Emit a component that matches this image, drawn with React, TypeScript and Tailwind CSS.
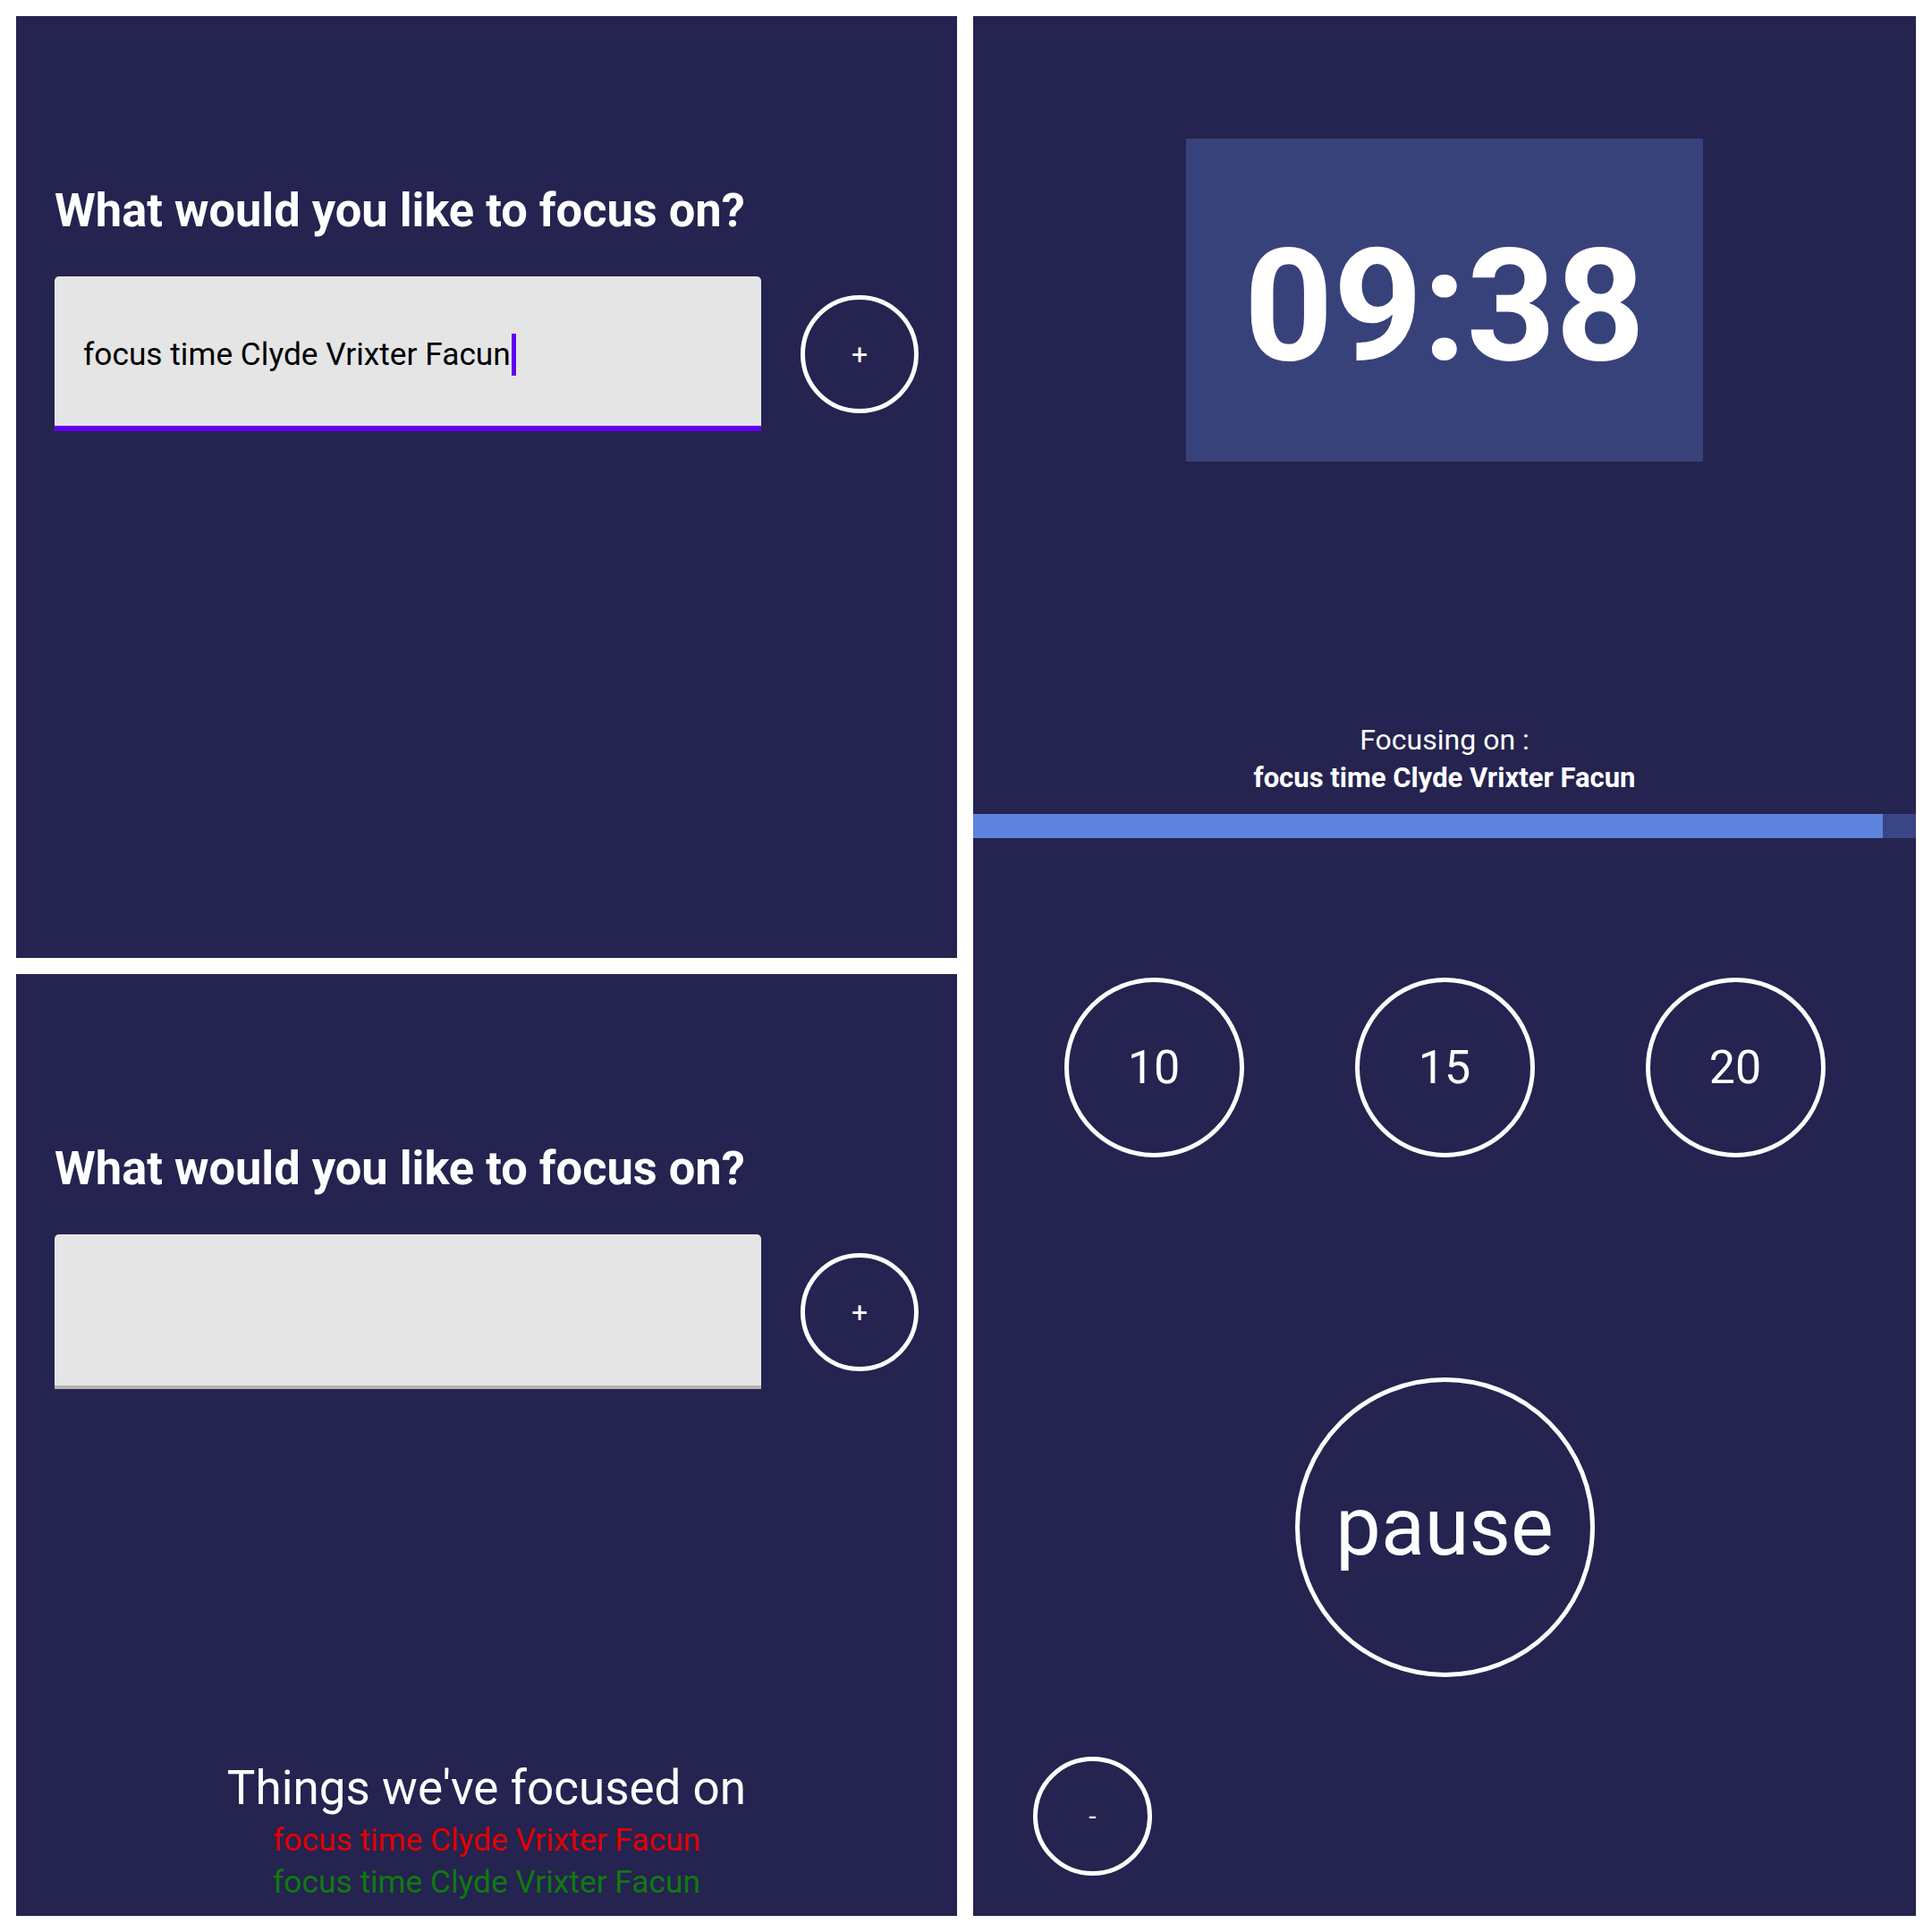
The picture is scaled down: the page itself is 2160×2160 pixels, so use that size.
import React from 'react';

const TASK = 'focus time Clyde Vrixter Facun';

const RoundButton = ({ label, size, text }: { label: string; size: string; text: string }) => (
  <button
    className={`${size} ${text} shrink-0 rounded-full border-[5px] border-white text-white flex items-center justify-center leading-none`}
  >
    {label}
  </button>
);

const FocusForm = ({ value, active }: { value: string; active: boolean }) => (
  <div className="flex flex-col pl-[43px]">
    <h1 className="text-[52.4px] font-bold leading-none text-white pt-[191px]">What would you like to focus on?</h1>
    <div className="flex items-center gap-[44px] mt-[48px]">
      <div
        className={`w-[790px] h-[173px] bg-[#e5e5e5] rounded-t-[5px] flex items-center pl-[32px] pt-[8px] ${
          active ? 'border-b-[6px] border-[#6200ee]' : 'border-b-[4px] border-[#b2b2b2]'
        }`}
      >
        <span className="text-[35.3px] text-black leading-none">{value}</span>
        {active && <span className="w-[5px] h-[47px] bg-[#6200ee] ml-[1px]" />}
      </div>
      <RoundButton label="+" size="w-[132px] h-[132px]" text="text-[32px]" />
    </div>
  </div>
);

const History = () => (
  <div className="mt-auto flex flex-col items-center pb-[14px]">
    <div className="text-[53px] text-white leading-[58px]">Things we've focused on</div>
    <div className="text-[35.3px] leading-[47px] text-[#e00000] mt-[6px]">{TASK}</div>
    <div className="text-[35.3px] leading-[47px] text-[#0f7a0f]">{TASK}</div>
  </div>
);

const TimerPanel = () => (
  <div className="flex-1 bg-[#25234f] flex flex-col">
    <div className="mt-[137px] mx-auto w-[578px] h-[361px] bg-[#38427a] flex items-center justify-center pt-[14px]">
      <span className="text-[174px] font-bold text-white leading-none">09:38</span>
    </div>
    <div className="mt-[295px] flex flex-col items-center text-white">
      <span className="text-[32px] leading-none">Focusing on :</span>
      <span className="text-[31px] font-bold leading-none mt-[11px]">{TASK}</span>
    </div>
    <div className="mt-[25px] h-[27px] w-full bg-[#3a4585]">
      <div className="h-full bg-[#5e83dd]" style={{ width: '96.5%' }} />
    </div>
    <div className="mt-[156px] flex justify-center gap-[124px]">
      <RoundButton label="10" size="w-[201px] h-[201px]" text="text-[52px]" />
      <RoundButton label="15" size="w-[201px] h-[201px]" text="text-[52px]" />
      <RoundButton label="20" size="w-[201px] h-[201px]" text="text-[52px]" />
    </div>
    <div className="mt-[246px] flex justify-center">
      <RoundButton label="pause" size="w-[335px] h-[335px]" text="text-[90px]" />
    </div>
    <div className="mt-[89px] pl-[67px]">
      <RoundButton label="-" size="w-[133px] h-[133px]" text="text-[30px]" />
    </div>
  </div>
);

export default function App() {
  return (
    <div className="w-[2160px] h-[2160px] bg-white p-[18px] flex gap-[18px] font-[Roboto,sans-serif]">
      <div className="w-[1052px] flex flex-col gap-[18px]">
        <div className="flex-1 bg-[#25234f]">
          <FocusForm value={TASK} active />
        </div>
        <div className="flex-1 bg-[#25234f] flex flex-col">
          <FocusForm value="" active={false} />
          <History />
        </div>
      </div>
      <TimerPanel />
    </div>
  );
}
